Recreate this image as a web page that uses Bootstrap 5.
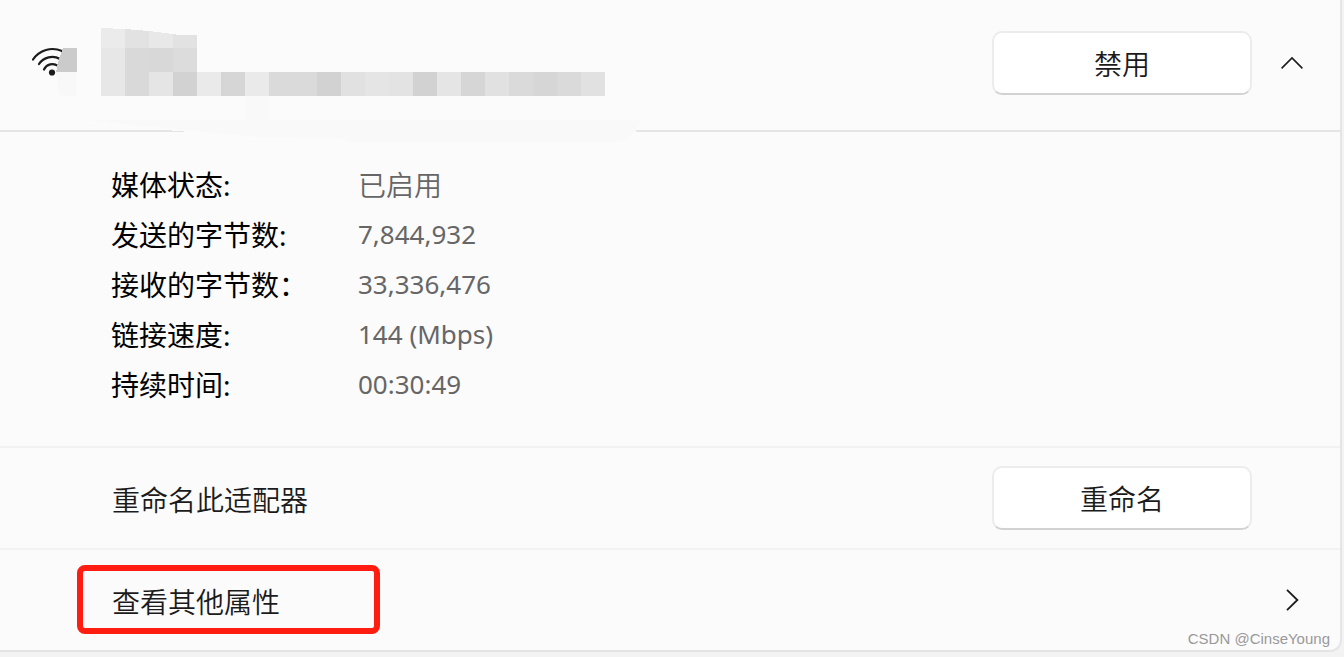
<!DOCTYPE html>
<html lang="zh-CN">
<head>
<meta charset="utf-8">
<meta name="viewport" content="width=device-width, initial-scale=1">
<title>网络适配器</title>
<link href="https://cdn.jsdelivr.net/npm/bootstrap@5.3.0/dist/css/bootstrap.min.css" rel="stylesheet">
<style>
  body { background: #f3f3f3; color: #1b1b1b; font-family: "Noto Sans", "Noto Sans CJK SC", sans-serif; font-size: 28px; font-weight: 350; line-height: 50px; }
  .adapter { background: #fbfbfb; border: solid #e5e5e5; border-width: 0 2px 2px 0; border-radius: 0 0 12px 0; margin-right: 2px; }
  .adapter-head { padding: 31px 32px 35px 32px; border-bottom: 2px solid #e5e5e5; }
  .adapter-details { padding: 28px 36px 36px 111px; border-bottom: 2px solid #f2f2f2; }
  .adapter-rename { padding: 18px 88px 18px 112px; border-bottom: 2px solid #f2f2f2; }
  .adapter-rename span { padding-top: 4px; }
  .adapter-more { padding: 15px 36px 16px 77px; }
  .adapter-details dl { display: grid; grid-template-columns: 247px 1fr; }
  .adapter-details dt { font-weight: 400; color: #000; }
  .adapter-details dd { color: #666; }
  .latin { font-size: 26px; font-weight: 400; line-height: 48px; }
  .win-btn { width: 260px; height: 64px; padding: 0; font-size: 28px; font-weight: 350; line-height: 62px; color: #1b1b1b; background: #fff; border: 2px solid #ececec; border-bottom-color: #d2d2d2; border-radius: 10px; }
  .win-btn:hover { background: #f9f9f9; border-color: #ececec; border-bottom-color: #d2d2d2; }
  .fold-btn { width: 32px; }
  .framed { width: 303px; height: 69px; padding: 6px 0 0 29px; border: 6px solid #ff1d11; border-radius: 8px; color: #1b1b1b; }
  .masked-name { left: 0; top: 0; pointer-events: none; }
  .watermark { right: 14px; bottom: 6px; font-family: "Liberation Sans", sans-serif; font-size: 15px; font-weight: 400; line-height: 24px; color: #999; }
</style>
</head>
<body>
<main class="adapter position-relative">
  <header class="adapter-head d-flex align-items-center">
    <svg width="46" height="32" viewBox="0 0 46 32" fill="none" stroke="#1b1b1b" stroke-width="2.2" stroke-linecap="round" aria-label="Wi-Fi">
      <path d="M1 12.5A23.5 23.5 0 0 1 30 4M7 17A16 16 0 0 1 28 12M12 22.500A9.200 9.200 0 0 1 26 19"/>
      <circle cx="20" cy="25.500" r="3.100" fill="#1b1b1b" stroke="none"/>
    </svg>
    <button type="button" class="btn win-btn ms-auto">禁用</button>
    <button type="button" class="btn fold-btn border-0 p-0 ms-4 d-flex justify-content-center" data-bs-toggle="collapse" data-bs-target="#details" aria-expanded="true" aria-label="折叠">
      <svg width="22" height="14" viewBox="0 0 22 14" fill="none" stroke="#1b1b1b" stroke-width="1.6"><path d="M0.6 12.4L11 2L21.4 12.4"/></svg>
    </button>
  </header>

  <!-- pixelated adapter name -->
  <svg class="masked-name position-absolute" width="650" height="150" viewBox="0 0 650 150" shape-rendering="crispEdges" aria-hidden="true">
    <path fill="#fbfbfb" d="M166 130H636V144H380L250 136L190 132Z"/>
    <path fill="#f9f9f9" d="M85 120H642Q640 126 635 132Q628 139 620 142L612 143H352Q343 139 330 138L255 137L205 132L130 125Z"/>
    <path fill="#f9f9f9" d="M245 96h24v24h-24z"/>
    <path fill="#f8f8f8" d="M56 72H77V96H60Q57 84 56 72Z"/>
    <path fill="#cbcbcb" d="M63 48H77V72H56Q59 57 63 48Z"/>
    <path fill="#ebebeb" d="M101 28L125 29V48H101z"/>
    <path fill="#e2e2e2" d="M125 29L149 31V48H125z"/>
    <path fill="#e8e8e8" d="M149 31L173 34V48H149z"/>
    <path fill="#e2e2e2" d="M173 34Q182 36 197 35V48H173z"/>
    <path fill="#e7e7e7" d="M101 48h24v48h-24z"/>
    <path fill="#d9d9d9" d="M125 48h24v48h-24z"/>
    <path fill="#d8d8d8" d="M149 48h24v24h-24z"/>
    <path fill="#dcdcdc" d="M173 48h24v24h-24z"/>
    <path fill="#e5e5e5" d="M149 72h24v24h-24z"/>
    <path fill="#d2d2d2" d="M173 72h24v24h-24zM317 72h24v24h-24zM413 72h24v24h-24z"/>
    <path fill="#eaeaea" d="M197 72h24v24h-24zM245 72h24v24h-24z"/>
    <path fill="#d6d6d6" d="M221 72h24v24h-24zM461 72h24v24h-24zM533 72h24v24h-24z"/>
    <path fill="#dadada" d="M269 72h48v24h-48zM509 72h24v24h-24zM557 72h24v24h-24z"/>
    <path fill="#e1e1e1" d="M341 72h24v24h-24zM485 72h24v24h-24zM581 72h24v24h-24z"/>
    <path fill="#e5e5e5" d="M365 72h24v24h-24zM437 72h24v24h-24z"/>
    <path fill="#e3e3e3" d="M389 72h24v24h-24z"/>
  </svg>

  <section id="details" class="collapse show">
    <div class="adapter-details">
      <dl class="m-0">
        <dt>媒体状态:</dt><dd class="m-0">已启用</dd>
        <dt>发送的字节数:</dt><dd class="m-0 latin">7,844,932</dd>
        <dt>接收的字节数：</dt><dd class="m-0 latin">33,336,476</dd>
        <dt>链接速度:</dt><dd class="m-0 latin">144 (Mbps)</dd>
        <dt>持续时间:</dt><dd class="m-0 latin">00:30:49</dd>
      </dl>
    </div>
    <div class="adapter-rename d-flex align-items-center justify-content-between">
      <span>重命名此适配器</span>
      <button type="button" class="btn win-btn">重命名</button>
    </div>
    <div class="adapter-more d-flex align-items-center justify-content-between">
      <a href="#details" class="framed d-block text-decoration-none">查看其他属性</a>
      <svg class="me-1" width="14" height="22" viewBox="0 0 14 22" fill="none" stroke="#1b1b1b" stroke-width="1.800" aria-hidden="true"><path d="M1 0.8L11.4 11L1 21.2"/></svg>
    </div>
  </section>
</main>
<div class="watermark position-absolute">CSDN @CinseYoung</div>
<script src="https://cdn.jsdelivr.net/npm/bootstrap@5.3.0/dist/js/bootstrap.bundle.min.js"></script>
</body>
</html>
